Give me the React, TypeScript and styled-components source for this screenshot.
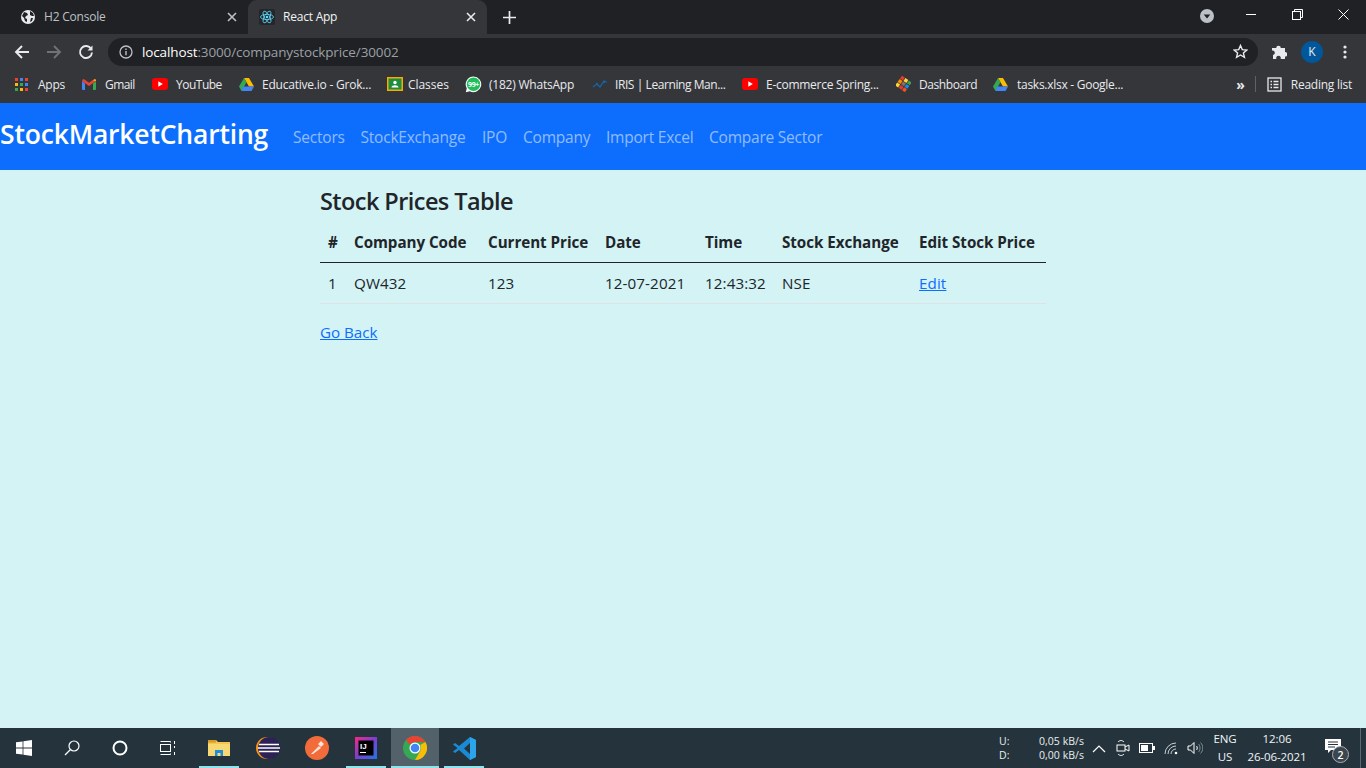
import React from "react";
import styled, { createGlobalStyle } from "styled-components";

const UI = `"Open Sans", "Noto Sans", "Liberation Sans", sans-serif`;

const Global = createGlobalStyle`
  html, body { margin: 0; padding: 0; height: 100%; overflow: hidden; background: #d3f3f5; }
  #root { height: 100%; }
  * { box-sizing: border-box; }
`;

const Screen = styled.div`
  width: 1366px; height: 768px; display: flex; flex-direction: column; font-family: ${UI};
`;

/* ---------- browser chrome ---------- */
const TabStrip = styled.div`
  height: 34px; background: #202124; display: flex; align-items: stretch; flex: none;
`;
const Tab = styled.div<{ $active?: boolean; $w: number }>`
  width: ${p => p.$w}px; display: flex; align-items: center; gap: 7px; padding: 0 11px 1px ${p => p.$active ? 11 : 20}px;
  background: ${p => (p.$active ? "#35363a" : "transparent")};
  border-radius: ${p => (p.$active ? "9px 9px 0 0" : "0")};
  color: ${p => (p.$active ? "#f1f3f4" : "#bdc1c6")};
  font-size: 12px; letter-spacing: -0.22px; flex: none;
`;
const TabTitle = styled.span`
  flex: 1; white-space: nowrap; margin-left: 1px;
`;
const NewTab = styled.div`
  width: 44px; display: flex; align-items: center; justify-content: center; flex: none;
`;
const StripEnd = styled.div`
  margin-left: auto; display: flex; align-items: flex-start; height: 100%;
`;
const WinBtn = styled.div<{ $w: number; $top: number }>`
  width: ${p => p.$w}px; height: 100%; display: flex; align-items: flex-start; padding-top: ${p => p.$top}px; justify-content: center;
`;
const Toolbar = styled.div`
  height: 35px; background: #35363a; display: flex; align-items: center; flex: none; padding-left: 10px;
`;
const NavIcon = styled.div<{ $w?: number; $ml?: number }>`
  width: ${p => p.$w ?? 32}px; margin-left: ${p => p.$ml ?? 0}px; height: 28px; display: flex; align-items: center; justify-content: center; flex: none;
`;
const Omnibox = styled.div`
  margin-left: 6px; width: 1150px; height: 28px; border-radius: 14px; background: #202124; display: flex; align-items: center;
  padding: 0 10px 0 11px; flex: none;
`;
const Url = styled.div`
  margin-left: 9px; flex: 1; font-size: 13.5px; letter-spacing: -0.13px; color: #9aa0a6; white-space: nowrap;
`;
const UrlHost = styled.span`
  color: #fff; font-weight: 400;
`;
const Avatar = styled.div`
  width: 22px; height: 22px; border-radius: 50%; background: #01579b; color: #e8eaed; font-size: 12px;
  display: flex; align-items: center; justify-content: center; flex: none;
`;
const ToolRight = styled.div`
  display: flex; align-items: center; margin-left: 2px;
`;
const Bookmarks = styled.div`
  height: 34px; background: #35363a; display: flex; align-items: center; padding: 0 0 4px 15px; flex: none;
`;
const Bookmark = styled.div<{ $w: number; $gap?: number; $ls?: number }>`
  width: ${p => p.$w}px; display: flex; align-items: center; gap: ${p => p.$gap ?? 9}px; flex: none;
  color: #e8eaed; font-size: 12px; letter-spacing: ${p => p.$ls ?? -0.22}px; white-space: nowrap;
`;
const BookmarksEnd = styled.div`
  margin-left: auto; display: flex; align-items: center; color: #e8eaed; font-size: 12px; letter-spacing: -0.25px;
  gap: 9px; padding-right: 14px;
`;
const Chevrons = styled.span`
  font-size: 14px; color: #e8eaed; margin-right: 1px; letter-spacing: 0; font-weight: 700;
`;
const Sep = styled.div`
  width: 1px; height: 16px; background: #5f6368; margin-right: 2px;
`;

/* ---------- page ---------- */
const Navbar = styled.nav`
  height: 67px; background: #0d6efd; display: flex; align-items: center; flex: none;
`;
const Brand = styled.a`
  color: #fff; font-size: 26.5px; letter-spacing: -0.18px; font-weight: 600; width: 269px; margin-right: 16px; white-space: nowrap; margin-top: -5px;
`;
const NavLink = styled.a<{ $w: number }>`
  color: rgba(255,255,255,.55); font-size: 15.5px; letter-spacing: -0.22px; padding: 0 8px; width: ${p => p.$w}px; white-space: nowrap; margin-top: 1px;
`;
const Main = styled.main`
  flex: 1; background: #d3f3f5; color: #212529;
`;
const Container = styled.div`
  width: 726px; margin: 0 auto; padding-top: 17px;
`;
const Title = styled.h2`
  margin: 0; font-size: 23.5px; font-weight: 600; letter-spacing: -0.57px; line-height: 29px; height: 35px;
`;
const Table = styled.table`
  width: 726px; table-layout: fixed; border-collapse: collapse; font-size: 15.2px; letter-spacing: 0.1px;
`;
const Th = styled.th`
  text-align: left; padding: 8px; height: 40px; font-weight: 700; border-bottom: 1px solid #212529; white-space: nowrap; letter-spacing: -0.05px;
`;
const Td = styled.td`
  padding: 8px; height: 41px; border-bottom: 1px solid #dee2e6; white-space: nowrap;
`;
const Link = styled.a`
  color: #0d6efd; text-decoration: underline;
`;
const Back = styled.div`
  margin-top: 16px; font-size: 15.2px; letter-spacing: -0.02px; line-height: 24px;
`;

/* ---------- taskbar ---------- */
const Taskbar = styled.div`
  height: 40px; background: #25343c; display: flex; align-items: stretch; flex: none; color: #fff;
`;
const TaskGroup = styled.div`
  display: flex; align-items: stretch;
`;
const TaskBtn = styled.div<{ $w?: number }>`
  width: ${p => p.$w ?? 48}px; display: flex; align-items: center; justify-content: center; flex: none;
`;
const AppBtn = styled.div<{ $active?: boolean; $open?: boolean }>`
  width: 48px; margin-right: 1px; display: flex; align-items: center; justify-content: center; flex: none; position: relative;
  background: ${p => (p.$active ? "#52616a" : "transparent")};
  &::after {
    content: ""; position: absolute; bottom: 0; height: 2px; background: #8fe3ec;
    left: ${p => (p.$active ? 0 : 4)}px; right: ${p => (p.$active ? 0 : 4)}px; display: ${p => (p.$open ? "block" : "none")};
  }
`;
const Tray = styled.div`
  margin-left: auto; display: flex; align-items: stretch; font-size: 11px;
`;
const Speed = styled.div`
  width: 92px; display: grid; grid-template-columns: 40px 1fr; align-content: center; padding-left: 4px; font-size: 10.5px; line-height: 14px; letter-spacing: .05px; color: #e8eef0;
`;
const Slot = styled.div<{ $w: number }>`
  width: ${p => p.$w}px; display: flex; align-items: center; justify-content: center; flex: none;
`;
const TwoLine = styled.div<{ $w: number }>`
  width: ${p => p.$w}px; display: flex; flex-direction: column; align-items: center; justify-content: center; flex: none;
  font-size: 11.5px; line-height: 18px; letter-spacing: -.1px; color: #f2f5f6; white-space: nowrap;
`;
const Notif = styled.div`
  width: 50px; padding: 0 4px 4px 0; display: flex; align-items: center; justify-content: center; position: relative; flex: none;
`;
const Badge = styled.span`
  position: absolute; left: 22px; top: 18px; width: 17px; height: 17px; border-radius: 50%;
  background: #3c474d; border: 1px solid #aab; color: #fff; font-size: 10.5px; font-weight: 600;
  display: flex; align-items: center; justify-content: center;
`;
const ShowDesk = styled.div`
  width: 6px; border-left: 1px solid #5a686f; flex: none;
`;

/* ---------- icons ---------- */
const Globe = () => (
  <svg width="16" height="16" viewBox="0 0 16 16"><circle cx="8" cy="8" r="7" fill="#e8eaed"/><path d="M4 3l3 1 1 2-2 1-1 2 2 1v3l-2-1-1-3-2-2zM10 2l3 2 1 3-2 0-2-1zM11 9l2 0-1 3-2 1z" fill="#202124"/></svg>
);
const Close = ({ c }: { c: string }) => (
  <svg width="10" height="10" viewBox="0 0 10 10"><path d="M1 1l8 8M9 1l-8 8" stroke={c} strokeWidth="1.6"/></svg>
);
const ReactLogo = () => (
  <svg width="16" height="16" viewBox="0 0 16 16"><rect width="16" height="16" rx="2" fill="#23272b"/><g fill="none" stroke="#61dafb" strokeWidth=".8"><ellipse cx="8" cy="8" rx="6.5" ry="2.6"/><ellipse cx="8" cy="8" rx="6.5" ry="2.6" transform="rotate(60 8 8)"/><ellipse cx="8" cy="8" rx="6.5" ry="2.6" transform="rotate(120 8 8)"/></g><circle cx="8" cy="8" r="1.3" fill="#61dafb"/></svg>
);
const Arrow = ({ c, flip }: { c: string; flip?: boolean }) => (
  <svg width="16" height="16" viewBox="0 0 16 16" style={flip ? { transform: "scaleX(-1)" } : undefined}><path d="M15 8H2M8 2L2 8l6 6" fill="none" stroke={c} strokeWidth="1.9"/></svg>
);
const Reload = () => (
  <svg width="16" height="16" viewBox="0 0 16 16"><path d="M13.2 5A6 6 0 1 0 14 8.5" fill="none" stroke="#e8eaed" strokeWidth="1.9"/><path d="M14.5 1.5v5h-5z" fill="#e8eaed"/></svg>
);
const Info = () => (
  <svg width="14" height="14" viewBox="0 0 14 14"><circle cx="7" cy="7" r="6" fill="none" stroke="#bdc1c6" strokeWidth="1.3"/><path d="M7 6v4.2M7 3.6v1.4" stroke="#bdc1c6" strokeWidth="1.4"/></svg>
);
const Star = () => (
  <svg width="15" height="15" viewBox="0 0 16 16"><path d="M8 1.6l1.9 4.4 4.8.4-3.6 3.1 1.1 4.7L8 11.7l-4.2 2.5 1.1-4.7L1.3 6.4 6.1 6z" fill="none" stroke="#e8eaed" strokeWidth="1.5"/></svg>
);
const Puzzle = () => (
  <svg width="16" height="16" viewBox="0 0 16 16"><path d="M0 5h4.200a2.300 2.300 0 1 1 4.600 0H13v4a2.300 2.300 0 1 1 0 4.600V16H8.600a2.300 2.300 0 1 0-4.200 0H1v-4a2.300 2.300 0 1 0-1-4.500z" fill="#e8eaed" transform="translate(1 -1)"/></svg>
);
const Dots = () => (
  <svg width="4" height="14" viewBox="0 0 4 14"><circle cx="2" cy="2" r="1.6" fill="#e8eaed"/><circle cx="2" cy="7" r="1.6" fill="#e8eaed"/><circle cx="2" cy="12" r="1.6" fill="#e8eaed"/></svg>
);
const Apps = () => {
  const colors = ["#ea4335", "#4285f4", "#ea4335", "#fbbc05", "#34a853", "#4285f4", "#34a853", "#fbbc05", "#ea4335"];
  return (
    <svg width="13" height="13" viewBox="0 0 13 13">
      {colors.map((c, i) => <rect key={i} x={(i % 3) * 5} y={Math.floor(i / 3) * 5} width="3" height="3" fill={c} />)}
    </svg>
  );
};
const Gmail = () => (
  <svg width="14" height="11" viewBox="0 0 14 11"><path d="M0 2v8a1 1 0 0 0 1 1h2V4.500z" fill="#4285f4"/><path d="M14 2v8a1 1 0 0 1-1 1h-2V4.500z" fill="#34a853"/><path d="M0 2l7 5 7-5-1-2-1 .2-5 3.600L2 .2 1 0z" fill="#ea4335"/><path d="M11 1.500L14 2 14 1 13 0z" fill="#fbbc05"/></svg>
);
const YouTube = () => (
  <svg width="16" height="12" viewBox="0 0 16 12"><rect width="16" height="12" rx="3" fill="#f00"/><path d="M6.300 3.300l4.500 2.700-4.500 2.700z" fill="#fff"/></svg>
);
const Drive = () => (
  <svg width="15" height="13" viewBox="0 0 15 13"><path d="M5 0h5l5 8.500h-5z" fill="#fbbc05"/><path d="M5 0l2.500 4.300L2.500 13 0 8.500z" fill="#34a853"/><path d="M4 8.500h11L12.500 13h-10z" fill="#4285f4"/></svg>
);
const Classroom = () => (
  <svg width="16" height="14" viewBox="0 0 16 14"><rect width="16" height="14" fill="#f9ab00"/><rect x="1.500" y="1.500" width="13" height="11" fill="#1e8e3e"/><circle cx="8" cy="5.500" r="1.700" fill="#fff"/><path d="M4.500 10.500c0-3 7-3 7 0z" fill="#fff"/></svg>
);
const WhatsApp = () => (
  <svg width="17" height="17" viewBox="0 0 17 17"><path d="M8.500.5a7.800 7.800 0 0 0-6.700 11.800L.8 16.200l4-1A7.800 7.800 0 1 0 8.500.5z" fill="#fff"/><circle cx="8.500" cy="8.200" r="6.700" fill="#1ebe5a"/><text x="8.500" y="10.600" textAnchor="middle" fontSize="7" fontWeight="700" letterSpacing="-.4" fill="#fff" fontFamily="Open Sans, sans-serif">99+</text></svg>
);
const Iris = () => (
  <svg width="16" height="10" viewBox="0 0 16 10"><path d="M1 8l4-3 3 3 4-6 3 1" fill="none" stroke="#1565a8" strokeWidth="1.300"/><circle cx="5" cy="5" r="1.200" fill="#1565a8"/><circle cx="12" cy="3" r="1.200" fill="#1565a8"/></svg>
);
const Dashboard = () => {
  const cs = ["#e53935", "#fdd835", "#43a047", "#fb8c00", "#8d6e63", "#1e88e5", "#fdd835", "#e53935", "#f4511e"];
  return (
    <svg width="15" height="16" viewBox="0 0 15 16">
      <g transform="rotate(35 7.500 8)">
        {cs.map((c, i) => <rect key={i} x={1.500 + (i % 3) * 4.200} y={2 + Math.floor(i / 3) * 4.200} width="3.500" height="3.500" fill={c} />)}
      </g>
    </svg>
  );
};
const ReadingList = () => (
  <svg width="15" height="15" viewBox="0 0 15 15"><rect x="1" y="1" width="13" height="13" fill="none" stroke="#e8eaed" strokeWidth="1.300"/><path d="M3.500 4.500h1.500M6.500 4.500h5M3.500 7.500h1.500M6.500 7.500h5M3.500 10.500h1.500M6.500 10.500h5" stroke="#e8eaed" strokeWidth="1.300"/></svg>
);
const Windows = () => (
  <svg width="16" height="16" viewBox="0 0 16 16"><path d="M0 2.300l6.600-.9v6.200H0zM7.400 1.300L16 0v7.600H7.400zM0 8.400h6.600v6.200L0 13.700zM7.400 8.400H16V16l-8.600-1.200z" fill="#fff"/></svg>
);
const Search = () => (
  <svg width="16" height="16" viewBox="0 0 16 16"><circle cx="10" cy="6" r="5" fill="none" stroke="#fff" strokeWidth="1.200"/><path d="M6.500 9.500L1 15" stroke="#fff" strokeWidth="1.300"/></svg>
);
const Cortana = () => (
  <svg width="16" height="16" viewBox="0 0 16 16"><circle cx="8" cy="8" r="6.500" fill="none" stroke="#fff" strokeWidth="2"/></svg>
);
const TaskView = () => (
  <svg width="16" height="16" viewBox="0 0 16 16" fill="none" stroke="#fff" strokeWidth="1"><rect x=".5" y="4.500" width="10" height="7"/><path d="M.5 1.500h10v1M.5 14.500h10v-1M14.500 1v3M14.500 6v2M14.500 12v3" /></svg>
);
const Explorer = () => (
  <svg width="22" height="18" viewBox="0 0 22 18"><path d="M0 1h8l2 2h12v14H0z" fill="#f3c64c"/><rect y="1" width="8" height="2.500" fill="#d99a28"/><rect y="5" width="22" height="12" fill="#f8d775"/><path d="M7 17v-6h8v6h-2.500v-3h-3v3z" fill="#1c8fd6"/></svg>
);
const Eclipse = () => (
  <svg width="24" height="24" viewBox="0 0 24 24"><circle cx="11" cy="12" r="11" fill="#f7941e"/><circle cx="13" cy="12" r="11" fill="#2c2255"/><path d="M3 8.500h20M2 12h22M3 15.500h20" stroke="#fff" strokeWidth="1.300"/></svg>
);
const Postman = () => (
  <svg width="24" height="24" viewBox="0 0 24 24"><circle cx="12" cy="12" r="12" fill="#f26b3a"/><path d="M6 18l8-8 2 2-8 6zM13 8l3-3 3 3-3 3z" fill="#fbe3d8"/></svg>
);
const Idea = () => (
  <svg width="22" height="22" viewBox="0 0 22 22"><defs><linearGradient id="ij" x1="0" y1="0" x2="1" y2="1"><stop offset="0" stopColor="#f9287f"/><stop offset=".5" stopColor="#7a3fd0"/><stop offset="1" stopColor="#1e78e6"/></linearGradient></defs><rect width="22" height="22" fill="url(#ij)"/><rect x="3.500" y="3.500" width="15" height="15" fill="#000"/><text x="5" y="11.500" fontSize="8" fontWeight="700" fill="#fff" fontFamily="Liberation Sans, sans-serif">IJ</text><rect x="5" y="15" width="6" height="1" fill="#fff"/></svg>
);
const Chrome = () => (
  <svg width="24" height="24" viewBox="0 0 24 24"><circle cx="12" cy="12" r="12" fill="#34a853"/><path d="M12 0a12 12 0 0 1 10.400 6H12a6 6 0 0 0-5.200 3L3 3.800A12 12 0 0 1 12 0z" fill="#ea4335"/><path d="M22.400 6A12 12 0 0 1 12 24l5.200-9a6 6 0 0 0 0-6z" fill="#fbbc05"/><circle cx="12" cy="12" r="5.500" fill="#fff"/><circle cx="12" cy="12" r="4.300" fill="#4285f4"/></svg>
);
const VSCode = () => (
  <svg width="25" height="25" viewBox="0 0 25 25"><path d="M18 1l6 3v17l-6 3L7 14l-4 3-2-1.500L5.500 12 1 8.500 3 7l4 3z" fill="#1a8ad4"/><path d="M18 1l6 3v17l-6 3z" fill="#2ba4ea"/><path d="M18 7l-6 5.500 6 5.500z" fill="#25343c"/></svg>
);
const Caret = () => (
  <svg width="14" height="9" viewBox="0 0 14 9"><path d="M1 8l6-6 6 6" fill="none" stroke="#fff" strokeWidth="1.200"/></svg>
);
const Meet = () => (
  <svg width="16" height="18" viewBox="0 0 16 18" fill="none" stroke="#fff" strokeWidth="1"><rect x="2" y="6" width="8" height="6" /><path d="M10 8l4-2v6l-4-2M3 3c2-2 4-2 6 0M3 15c2 2 4 2 6 0"/></svg>
);
const Battery = () => (
  <svg width="16" height="10" viewBox="0 0 16 10"><rect x=".5" y=".5" width="13" height="9" fill="none" stroke="#fff"/><rect x="2" y="2" width="7" height="6" fill="#fff"/><rect x="14" y="3" width="2" height="4" fill="#fff"/></svg>
);
const Wifi = () => (
  <svg width="15" height="13" viewBox="0 0 15 13" fill="none" stroke="#c6ced1" strokeWidth="1"><path d="M1 12A11 11 0 0 1 12 1M4 12a8 8 0 0 1 8-8M7 12a5 5 0 0 1 5-5"/><circle cx="12" cy="11" r="1.300" fill="#fff" stroke="none"/></svg>
);
const Volume = () => (
  <svg width="16" height="14" viewBox="0 0 16 14" fill="none" stroke="#fff" strokeWidth="1"><path d="M1 5h2.500L7 1.500v11L3.500 9H1z"/><path d="M9.500 5c1 1 1 3 0 4"/><path d="M11.500 3c2 2 2 6 0 8M13.500 1.500c3 3 3 8 0 11" stroke="#7f8c93"/></svg>
);
const NotifIcon = () => (
  <svg width="16" height="14" viewBox="0 0 16 14"><path d="M0 0h16v11H6l-3 3v-3H0z" fill="#fff"/><path d="M3 3h10M3 5.500h10M3 8h7" stroke="#25343c"/></svg>
);

const cols = [26, 134, 117, 100, 77, 137, 135];

export default function App() {
  return (
    <Screen>
      <Global />
      <TabStrip>
        <Tab $w={248}><Globe /><TabTitle>H2 Console</TabTitle><Close c="#bdc1c6" /></Tab>
        <Tab $active $w={239}><ReactLogo /><TabTitle>React App</TabTitle><Close c="#e8eaed" /></Tab>
        <NewTab><svg width="13" height="13" viewBox="0 0 13 13"><path d="M6.500 0v13M0 6.500h13" stroke="#e8eaed" strokeWidth="1.700"/></svg></NewTab>
        <StripEnd>
          <WinBtn $w={42} $top={9}><svg width="14" height="14" viewBox="0 0 14 14"><circle cx="7" cy="7" r="7" fill="#bdc1c6"/><path d="M3.700 5.500h6.600L7 9.500z" fill="#202124"/></svg></WinBtn>
          <WinBtn $w={46} $top={14}><svg width="10" height="1" viewBox="0 0 10 1"><rect width="10" height="1" fill="#fff"/></svg></WinBtn>
          <WinBtn $w={46} $top={9}><svg width="11" height="11" viewBox="0 0 11 11" fill="none" stroke="#fff"><rect x=".5" y="2.500" width="8" height="8"/><path d="M2.500 2.500v-2h8v8h-2"/></svg></WinBtn>
          <WinBtn $w={46} $top={9}><svg width="11" height="11" viewBox="0 0 11 11"><path d="M.5.500l10 10M10.500.5l-10 10" stroke="#fff"/></svg></WinBtn>
        </StripEnd>
      </TabStrip>
      <Toolbar>
        <NavIcon $w={24}><Arrow c="#e8eaed" /></NavIcon>
        <NavIcon $ml={4}><Arrow c="#6f7276" flip /></NavIcon>
        <NavIcon><Reload /></NavIcon>
        <Omnibox>
          <Info />
          <Url><UrlHost>localhost</UrlHost>:3000/companystockprice/30002</Url>
          <Star />
        </Omnibox>
        <ToolRight>
          <NavIcon $w={38}><Puzzle /></NavIcon>
          <NavIcon $w={28}><Avatar>K</Avatar></NavIcon>
          <NavIcon $w={38}><Dots /></NavIcon>
        </ToolRight>
      </Toolbar>
      <Bookmarks>
        <Bookmark $w={67} $gap={10}><Apps />Apps</Bookmark>
        <Bookmark $w={70} $ls={-0.55}><Gmail />Gmail</Bookmark>
        <Bookmark $w={87} $gap={8} $ls={-0.5}><YouTube />YouTube</Bookmark>
        <Bookmark $w={148} $gap={8}><Drive />Educative.io - Grok...</Bookmark>
        <Bookmark $w={78} $gap={5} $ls={-0.05}><Classroom />Classes</Bookmark>
        <Bookmark $w={127} $gap={7}><WhatsApp />(182) WhatsApp</Bookmark>
        <Bookmark $w={150} $gap={7} $ls={-0.42}><Iris />IRIS | Learning Man...</Bookmark>
        <Bookmark $w={154} $gap={8} $ls={-0.27}><YouTube />E-commerce Spring...</Bookmark>
        <Bookmark $w={97} $gap={8} $ls={-0.42}><Dashboard />Dashboard</Bookmark>
        <Bookmark $w={140} $gap={9} $ls={-0.27}><Drive />tasks.xlsx - Google...</Bookmark>
        <BookmarksEnd>
          <Chevrons>»</Chevrons>
          <Sep />
          <ReadingList />
          Reading list
        </BookmarksEnd>
      </Bookmarks>

      <Navbar>
        <Brand>StockMarketCharting</Brand>
        <NavLink $w={67.5}>Sectors</NavLink>
        <NavLink $w={121.5}>StockExchange</NavLink>
        <NavLink $w={41}>IPO</NavLink>
        <NavLink $w={83}>Company</NavLink>
        <NavLink $w={103}>Import Excel</NavLink>
        <NavLink $w={130}>Compare Sector</NavLink>
      </Navbar>
      <Main>
        <Container>
          <Title>Stock Prices Table</Title>
          <Table>
            <colgroup>{cols.map((w, i) => <col key={i} width={w} />)}</colgroup>
            <thead>
              <tr>
                <Th>#</Th><Th>Company Code</Th><Th>Current Price</Th><Th>Date</Th><Th>Time</Th><Th>Stock Exchange</Th><Th>Edit Stock Price</Th>
              </tr>
            </thead>
            <tbody>
              <tr>
                <Td>1</Td><Td>QW432</Td><Td>123</Td><Td>12-07-2021</Td><Td>12:43:32</Td><Td>NSE</Td><Td><Link>Edit</Link></Td>
              </tr>
            </tbody>
          </Table>
          <Back><Link>Go Back</Link></Back>
        </Container>
      </Main>

      <Taskbar>
        <TaskGroup>
          <TaskBtn><Windows /></TaskBtn>
          <TaskBtn><Search /></TaskBtn>
          <TaskBtn><Cortana /></TaskBtn>
          <TaskBtn><TaskView /></TaskBtn>
          <TaskBtn $w={3} />
          <AppBtn $open><Explorer /></AppBtn>
          <AppBtn><Eclipse /></AppBtn>
          <AppBtn><Postman /></AppBtn>
          <AppBtn $open><Idea /></AppBtn>
          <AppBtn $active $open><Chrome /></AppBtn>
          <AppBtn $open><VSCode /></AppBtn>
        </TaskGroup>
        <Tray>
          <Speed><span>U:</span><span>0,05 kB/s</span><span>D:</span><span>0,00 kB/s</span></Speed>
          <Slot $w={24}><Caret /></Slot>
          <Slot $w={24}><Meet /></Slot>
          <Slot $w={24}><Battery /></Slot>
          <Slot $w={24}><Wifi /></Slot>
          <Slot $w={23}><Volume /></Slot>
          <TwoLine $w={38}><span>ENG</span><span>US</span></TwoLine>
          <TwoLine $w={66}><span>12:06</span><span>26-06-2021</span></TwoLine>
          <Notif><NotifIcon /><Badge>2</Badge></Notif>
          <ShowDesk />
        </Tray>
      </Taskbar>
    </Screen>
  );
}
